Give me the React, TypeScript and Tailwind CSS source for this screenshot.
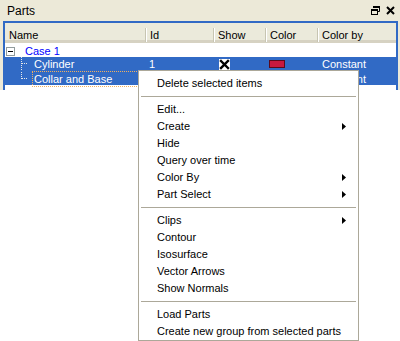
import { ReactNode } from "react";

const cols = "grid grid-cols-[140px_68px_52px_52px_1fr]";

function HeaderCell({ label, first }: { label: string; first?: boolean }) {
  return (
    <div className="flex h-full items-center pt-[4px]">
      {!first ? (
        <span className="h-[14px] w-[2px] shrink-0 border-l border-r border-l-[#C7C5B2] border-r-white" />
      ) : null}
      <span className={first ? "pl-[4px]" : "pl-[3px]"}>{label}</span>
    </div>
  );
}

function MinusBox() {
  return (
    <svg width="9" height="9" viewBox="0 0 9 9" className="block">
      <rect x="0.5" y="0.5" width="8" height="8" fill="#fff" stroke="#919B9C" />
      <line x1="2" y1="4.5" x2="7" y2="4.5" stroke="#000" />
    </svg>
  );
}

function TreeBranch({ last }: { last?: boolean }) {
  return (
    <svg width="29" height="14" viewBox="0 0 29 14" className="block shrink-0">
      <line
        x1="16.5"
        y1="0"
        x2="16.5"
        y2={last ? 7 : 14}
        stroke="#E8E8E8"
        strokeDasharray="1 1"
      />
      <line x1="17" y1="6.5" x2="23" y2="6.5" stroke="#E8E8E8" strokeDasharray="1 1" />
    </svg>
  );
}

function CheckX() {
  return (
    <svg width="11" height="11" viewBox="0 0 11 11" className="block">
      <rect x="0" y="0" width="11" height="11" fill="#fff" />
      <path
        d="M2 2 L9 9 M9 2 L2 9"
        stroke="#000"
        strokeWidth="2.4"
        strokeLinecap="square"
      />
    </svg>
  );
}

function MenuItem({ children, sub }: { children: ReactNode; sub?: boolean }) {
  return (
    <div className="flex h-[17px] items-center justify-between pl-[18px] pr-[12px] leading-[17px]">
      <span>{children}</span>
      {sub ? (
        <svg width="4" height="7" viewBox="0 0 4 7" className="block">
          <path d="M0 0 L4 3.5 L0 7 Z" fill="#000" />
        </svg>
      ) : null}
    </div>
  );
}

function MenuSep() {
  return (
    <div className="px-[2px] pt-[4px] pb-[4px]">
      <div className="h-[1px] bg-[#ACA899]" />
    </div>
  );
}

export default function App() {
  return (
    <div className="relative h-[341px] w-[400px] overflow-hidden bg-white font-['Liberation_Sans',Arial,sans-serif] text-[11px] text-black">
      <div className="bg-[#ECE9D8] pl-[3px] pr-[2px]">
        <div className="flex h-[21px] items-center justify-between pl-[4px] pr-[3px]">
          <span className="text-[12px]">Parts</span>
          <div className="flex items-center gap-[6px]">
            <svg width="9" height="9" viewBox="0 0 9 9" className="block">
              <path d="M2.5 0.5 H8.5 V5.5 H7" fill="none" stroke="#000" />
              <rect x="2" y="0" width="7" height="2" fill="#000" />
              <rect x="0.5" y="3.5" width="6" height="5" fill="none" stroke="#000" />
              <rect x="0" y="3" width="7" height="2" fill="#000" />
            </svg>
            <svg width="9" height="9" viewBox="0 0 9 9" className="block">
              <path d="M1 1 L8 8 M8 1 L1 8" stroke="#000" strokeWidth="2" />
            </svg>
          </div>
        </div>
        <div className="h-[69px] border-x-2 border-t-2 border-[#316AC5] bg-white">
          <div className={`${cols} h-[20px] border-b-[3px] border-b-[#D6D2C2] bg-[#EBEADB]`}>
            <HeaderCell label="Name" first />
            <HeaderCell label="Id" />
            <HeaderCell label="Show" />
            <HeaderCell label="Color" />
            <HeaderCell label="Color by" />
          </div>
          <div className={`${cols} h-[14px] items-center leading-[14px]`}>
            <div className="flex items-center pt-[1px]">
              <span className="relative ml-[1px] mr-[10px]">
                <MinusBox />
              </span>
              <span className="text-[#0000FF]">Case 1</span>
            </div>
          </div>
          <div className={`${cols} h-[14px] items-center bg-[#316AC5] leading-[14px] text-white`}>
            <div className="flex items-center">
              <TreeBranch />
              <span>Cylinder</span>
            </div>
            <div className="pl-[4px]">1</div>
            <div className="pl-[6px]">
              <CheckX />
            </div>
            <div className="pl-[4px]">
              <div className="h-[8px] w-[16px] border border-[#5A0A1C] bg-[#C8193F]" />
            </div>
            <div className="pl-[5px]">Constant</div>
          </div>
          <div className={`${cols} h-[14px] items-center bg-[#316AC5] leading-[14px] text-white`}>
            <div className="flex h-full items-center">
              <TreeBranch last />
              <span className="-ml-[2px] flex h-full flex-1 items-center border border-dotted border-[#F0B060] pl-[1px]">
                Collar and Base
              </span>
            </div>
            <div />
            <div />
            <div />
            <div className="pl-[5px]">Constant</div>
          </div>
        </div>
      </div>

      <div className="absolute left-[138px] top-[70px] w-[221px] border border-[#ACA899] bg-white pt-[4px]">
        <MenuItem>Delete selected items</MenuItem>
        <MenuSep />
        <MenuItem>Edit...</MenuItem>
        <MenuItem sub>Create</MenuItem>
        <MenuItem>Hide</MenuItem>
        <MenuItem>Query over time</MenuItem>
        <MenuItem sub>Color By</MenuItem>
        <MenuItem sub>Part Select</MenuItem>
        <MenuSep />
        <MenuItem sub>Clips</MenuItem>
        <MenuItem>Contour</MenuItem>
        <MenuItem>Isosurface</MenuItem>
        <MenuItem>Vector Arrows</MenuItem>
        <MenuItem>Show Normals</MenuItem>
        <MenuSep />
        <MenuItem>Load Parts</MenuItem>
        <MenuItem>Create new group from selected parts</MenuItem>
      </div>
    </div>
  );
}
